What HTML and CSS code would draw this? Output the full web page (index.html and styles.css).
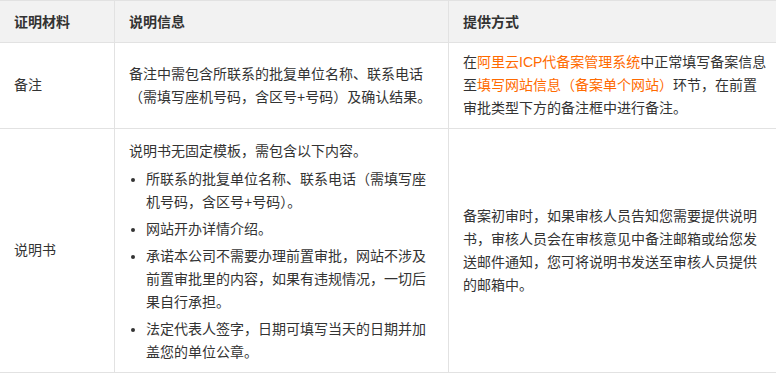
FILE: index.html
```html
<!DOCTYPE html>
<html lang="zh-CN">
<head>
<meta charset="utf-8">
<title>证明材料</title>
<link rel="stylesheet" href="styles.css">
</head>
<body>
<table class="doc-table">
  <colgroup>
    <col class="c1">
    <col class="c2">
    <col class="c3">
  </colgroup>
  <thead>
    <tr>
      <th>证明材料</th>
      <th>说明信息</th>
      <th>提供方式</th>
    </tr>
  </thead>
  <tbody>
    <tr>
      <td>备注</td>
      <td>备注中需包含所联系的批复单位名称、联系电话（需填写座机号码，含区号+号码）及确认结果。</td>
      <td>在<a class="link">阿里云ICP代备案管理系统</a>中正常填写备案信息至<a class="link">填写网站信息（备案单个网站）</a>环节，在前置审批类型下方的备注框中进行备注。</td>
    </tr>
    <tr>
      <td>说明书</td>
      <td class="top">
        <p class="lead">说明书无固定模板，需包含以下内容。</p>
        <ul class="items">
          <li>所联系的批复单位名称、联系电话（需填写座机号码，含区号+号码）。</li>
          <li>网站开办详情介绍。</li>
          <li>承诺本公司不需要办理前置审批，网站不涉及前置审批里的内容，如果有违规情况，一切后果自行承担。</li>
          <li>法定代表人签字，日期可填写当天的日期并加盖您的单位公章。</li>
        </ul>
      </td>
      <td>备案初审时，如果审核人员告知您需要提供说明书，审核人员会在审核意见中备注邮箱或给您发送邮件通知，您可将说明书发送至审核人员提供的邮箱中。</td>
    </tr>
  </tbody>
</table>
</body>
</html>
```

FILE: styles.css
```css
html, body {
  margin: 0;
  padding: 0;
  background: #ffffff;
  overflow: hidden;
}

body {
  font-family: "Liberation Sans", "Noto Sans CJK SC", sans-serif;
  font-size: 14px;
  line-height: 23px;
  color: #333333;
}

.doc-table {
  width: 784px;
  margin-left: -1px;
  border-collapse: collapse;
  table-layout: fixed;
}

.c1 { width: 115px; }
.c2 { width: 334px; }
.c3 { width: 335px; }

.doc-table th,
.doc-table td {
  border: 1px solid #e2e2e2;
  padding: 8px 14px;
  text-align: left;
  vertical-align: middle;
}

.doc-table th {
  background: #f2f2f2;
  font-weight: 600;
  height: 24px;
  padding-top: 9px;
  padding-bottom: 8px;
}

.doc-table td.top {
  vertical-align: top;
}

.link {
  color: #ff6a00;
  text-decoration: none;
}

.lead {
  margin: 3px 0 0 0;
}

.items {
  margin: 5px 0 0 0;
  padding-left: 17px;
}

.items li {
  margin-bottom: 4px;
}

.items li:last-child {
  margin-bottom: 0;
}
```
